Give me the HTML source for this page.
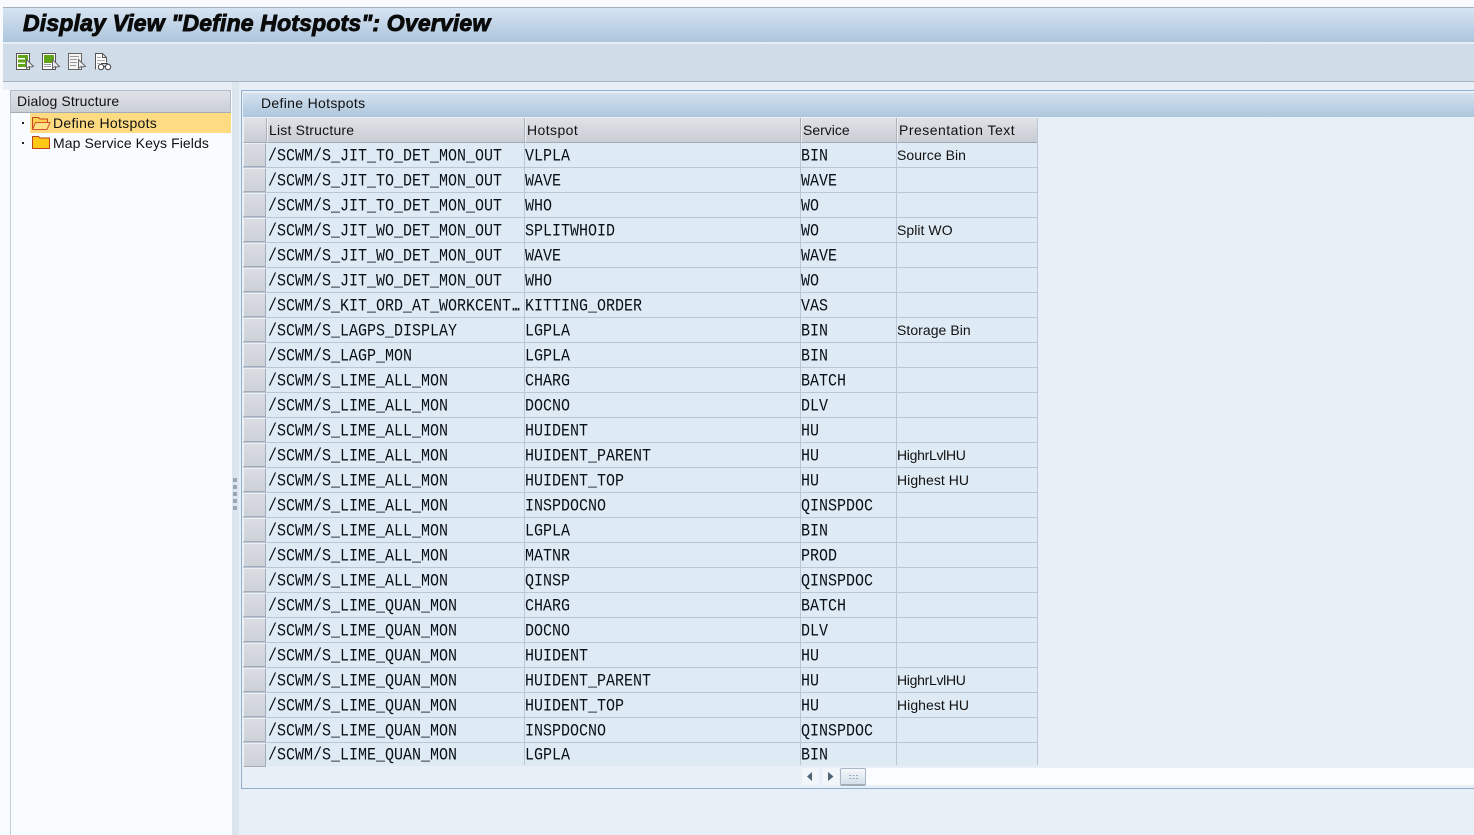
<!DOCTYPE html>
<html><head><meta charset="utf-8"><style>
html,body{margin:0;padding:0;width:1474px;height:835px;overflow:hidden;background:#e8eff7}
*{box-sizing:border-box}
.a{position:absolute}
.u{font-family:"Liberation Sans",sans-serif;font-size:14px;letter-spacing:.12px;color:#111;white-space:nowrap}
#rows{position:absolute;left:243px;top:143px;width:795px}
.r{position:relative;height:25px;width:795px;background:#deebf5;border-bottom:1px solid #b9c7d6}
.r:last-child{height:23px;border-bottom:0}
.r>*{position:absolute;top:0;height:100%;white-space:nowrap}
.s{left:0;width:23px;background:linear-gradient(#dadde3,#cdd1d8);border:1px solid #a9b2bc;border-color:#eef0f3 #a2abb6 #a2abb6 #eef0f3;top:0!important;height:24px!important}
.r>.m{top:2px;font-family:"Liberation Mono",monospace;font-size:15px;line-height:24px;color:#0a0e16;transform:scaleY(1.18);transform-origin:50% 12px}
.r:last-child>.m{top:1px}
.c1{left:25px}.c2{left:282px}.c3{left:558px}
.c4{left:654px;font-family:"Liberation Sans",sans-serif;font-size:14px;letter-spacing:.05px;line-height:25px;color:#111}
.h{position:absolute;top:118px;height:25px;background:linear-gradient(#dfe2e7,#c9cdd4);border-right:1px solid #a9b2bc;border-bottom:1px solid #a2abb6;border-left:1px solid #eef0f3;line-height:25px}
</style></head><body>
<div class="a" style="left:0;top:0;width:1474px;height:7px;background:#f8fafd"></div>
<div class="a" style="left:0;top:0;width:3px;height:90px;background:#f8fafd;z-index:3"></div>
<div class="a" style="left:3px;top:7px;width:1471px;height:2px;background:#a7b1bd"></div>
<div class="a" style="left:3px;top:8px;width:1471px;height:34px;background:linear-gradient(#d7e4f2,#adc5dc)"></div>
<div class="a" style="left:3px;top:42px;width:1471px;height:2px;background:#e5edf5"></div>
<div class="a" style="left:3px;top:44px;width:1471px;height:37px;background:#d0dde8"></div>
<div class="a" style="left:3px;top:81px;width:1471px;height:1px;background:#a5b2bf"></div>
<div class="a" style="left:23px;top:9px;line-height:29px;font-family:'Liberation Sans',sans-serif;font-weight:bold;font-style:italic;font-size:23px;letter-spacing:.17px;color:#0a0a0a;-webkit-text-stroke:.9px #0a0a0a;white-space:nowrap">Display View "Define Hotspots": Overview</div>

<svg class="a" style="left:15px;top:51px" width="100" height="22" viewBox="0 0 100 22">
<g fill="none" stroke-width="1">
<rect x="1.5" y="2.5" width="13" height="16" fill="#fff" stroke="#555"/>
<rect x="3" y="4" width="7" height="3" fill="#5fa516"/><rect x="3" y="8.500" width="7" height="3" fill="#5fa516"/><rect x="3" y="13" width="7" height="3" fill="#5fa516"/>
<rect x="10" y="4" width="3" height="12" fill="#5fa516"/>
<path d="M11.500 8.500v9l2.500-2 2 .5 2.500-.5-7-7z" fill="#e8edf2" stroke="#666"/>
<rect x="27.500" y="2.500" width="13" height="16" fill="#fff" stroke="#555"/>
<rect x="29" y="4" width="10" height="8" fill="#5fa516"/>
<path d="M29 13.500h7M29 15.500h7" stroke="#999"/>
<path d="M37.500 8.500v9l2.500-2 2 .5 2.500-.5-7-7z" fill="#e8edf2" stroke="#666"/>
<rect x="53.500" y="2.500" width="13" height="16" fill="#f4f4f4" stroke="#666"/>
<path d="M55 5.500h9M55 8.500h7M55 11.500h7M55 14.500h6" stroke="#999"/>
<path d="M63.500 8.500v9l2.500-2 2 .5 2.500-.5-7-7z" fill="#e8edf2" stroke="#666"/>
<path d="M80.500 18.500v-16h7l4 4v5" fill="#fff" stroke="#555"/>
<path d="M87.500 2.500v4h4" stroke="#555"/>
<path d="M82 6.500h4M82 9.500h8M82 12.500h3" stroke="#aaa"/>
<circle cx="86" cy="16" r="2.700" fill="#fff" stroke="#444"/><circle cx="93" cy="16" r="2.700" fill="#fff" stroke="#444"/>
<path d="M86 12.500h7M88.500 15.500h2" stroke="#444"/>
</g></svg>

<!-- left panel -->
<div class="a" style="left:0;top:82px;width:232px;height:753px;background:#f8fbff"></div>
<div class="a" style="left:0;top:82px;width:232px;height:8px;background:#e8eff7"></div>
<div class="a" style="left:10px;top:90px;width:1px;height:745px;background:#c6ced8"></div>
<div class="a u" style="left:10px;top:90px;width:221px;height:23px;background:linear-gradient(#dfe2e7,#cbcfd6);border:1px solid #b6bcc6;border-bottom:1px solid #a2abb6;padding-left:6px;line-height:21px">Dialog Structure</div>
<div class="a" style="left:30px;top:113px;width:201px;height:20px;background:#fddb83"></div>
<div class="a" style="left:22px;top:122px;width:2px;height:2px;background:#222"></div>
<div class="a" style="left:22px;top:142px;width:2px;height:2px;background:#222"></div>
<svg class="a" style="left:32px;top:115px" width="19" height="16" viewBox="0 0 19 16">
<path d="M.5 14.500v-12h6l1.500 1.500h7.500v3" fill="#fbd252" stroke="#c4431c"/>
<path d="M.5 14.500l3-7h14.500l-3 7z" fill="#fde28a" stroke="#d2562a"/>
</svg>
<svg class="a" style="left:32px;top:135px" width="19" height="16" viewBox="0 0 19 16">
<path d="M.5 13.500v-12h6l1.500 1.500h9.500v10.500z" fill="#fdc916" stroke="#c0421c"/>
</svg>
<div class="a u" style="left:53px;top:113px;line-height:21px;letter-spacing:.3px">Define Hotspots</div>
<div class="a u" style="left:53px;top:133px;line-height:21px;letter-spacing:.08px">Map Service Keys Fields</div>

<!-- sash -->
<div class="a" style="left:232px;top:82px;width:7px;height:753px;background:#dbe6ee"></div>
<div class="a" style="left:233px;top:478px;width:4px;height:4px;background:#97a7b6"></div>
<div class="a" style="left:233px;top:485px;width:4px;height:4px;background:#97a7b6"></div>
<div class="a" style="left:233px;top:492px;width:4px;height:4px;background:#97a7b6"></div>
<div class="a" style="left:233px;top:499px;width:4px;height:4px;background:#97a7b6"></div>
<div class="a" style="left:233px;top:506px;width:4px;height:4px;background:#97a7b6"></div>

<!-- right panel -->
<div class="a" style="left:241px;top:90px;width:1233px;height:699px;border:1px solid #8fb0cf;border-right:0"></div>
<div class="a" style="left:242px;top:92px;width:1232px;height:1px;background:#e8eff7"></div>
<div class="a u" style="left:243px;top:93px;width:1231px;height:24px;background:linear-gradient(#d3e1ef,#aec6dd);padding-left:18px;line-height:21px;letter-spacing:.32px">Define Hotspots</div>

<div class="h" style="left:243px;width:24px;padding:0"></div>
<div class="h u" style="left:267px;width:258px;padding-left:1px;letter-spacing:.2px">List Structure</div>
<div class="h u" style="left:525px;width:276px;padding-left:1px;letter-spacing:.42px">Hotspot</div>
<div class="h u" style="left:801px;width:96px;padding-left:1px;letter-spacing:0">Service</div>
<div class="h u" style="left:897px;width:141px;padding-left:1px;letter-spacing:.48px">Presentation Text</div>

<div id="rows">
<div class="r"><div class="s"></div><div class="m c1">/SCWM/S_JIT_TO_DET_MON_OUT</div><div class="m c2">VLPLA</div><div class="m c3">BIN</div><div class="c4">Source Bin</div></div>
<div class="r"><div class="s"></div><div class="m c1">/SCWM/S_JIT_TO_DET_MON_OUT</div><div class="m c2">WAVE</div><div class="m c3">WAVE</div></div>
<div class="r"><div class="s"></div><div class="m c1">/SCWM/S_JIT_TO_DET_MON_OUT</div><div class="m c2">WHO</div><div class="m c3">WO</div></div>
<div class="r"><div class="s"></div><div class="m c1">/SCWM/S_JIT_WO_DET_MON_OUT</div><div class="m c2">SPLITWHOID</div><div class="m c3">WO</div><div class="c4">Split WO</div></div>
<div class="r"><div class="s"></div><div class="m c1">/SCWM/S_JIT_WO_DET_MON_OUT</div><div class="m c2">WAVE</div><div class="m c3">WAVE</div></div>
<div class="r"><div class="s"></div><div class="m c1">/SCWM/S_JIT_WO_DET_MON_OUT</div><div class="m c2">WHO</div><div class="m c3">WO</div></div>
<div class="r"><div class="s"></div><div class="m c1">/SCWM/S_KIT_ORD_AT_WORKCENT<span style="letter-spacing:-6.500px;margin-left:-2px">...</span></div><div class="m c2">KITTING_ORDER</div><div class="m c3">VAS</div></div>
<div class="r"><div class="s"></div><div class="m c1">/SCWM/S_LAGPS_DISPLAY</div><div class="m c2">LGPLA</div><div class="m c3">BIN</div><div class="c4">Storage Bin</div></div>
<div class="r"><div class="s"></div><div class="m c1">/SCWM/S_LAGP_MON</div><div class="m c2">LGPLA</div><div class="m c3">BIN</div></div>
<div class="r"><div class="s"></div><div class="m c1">/SCWM/S_LIME_ALL_MON</div><div class="m c2">CHARG</div><div class="m c3">BATCH</div></div>
<div class="r"><div class="s"></div><div class="m c1">/SCWM/S_LIME_ALL_MON</div><div class="m c2">DOCNO</div><div class="m c3">DLV</div></div>
<div class="r"><div class="s"></div><div class="m c1">/SCWM/S_LIME_ALL_MON</div><div class="m c2">HUIDENT</div><div class="m c3">HU</div></div>
<div class="r"><div class="s"></div><div class="m c1">/SCWM/S_LIME_ALL_MON</div><div class="m c2">HUIDENT_PARENT</div><div class="m c3">HU</div><div class="c4" style="letter-spacing:-.3px">HighrLvlHU</div></div>
<div class="r"><div class="s"></div><div class="m c1">/SCWM/S_LIME_ALL_MON</div><div class="m c2">HUIDENT_TOP</div><div class="m c3">HU</div><div class="c4">Highest HU</div></div>
<div class="r"><div class="s"></div><div class="m c1">/SCWM/S_LIME_ALL_MON</div><div class="m c2">INSPDOCNO</div><div class="m c3">QINSPDOC</div></div>
<div class="r"><div class="s"></div><div class="m c1">/SCWM/S_LIME_ALL_MON</div><div class="m c2">LGPLA</div><div class="m c3">BIN</div></div>
<div class="r"><div class="s"></div><div class="m c1">/SCWM/S_LIME_ALL_MON</div><div class="m c2">MATNR</div><div class="m c3">PROD</div></div>
<div class="r"><div class="s"></div><div class="m c1">/SCWM/S_LIME_ALL_MON</div><div class="m c2">QINSP</div><div class="m c3">QINSPDOC</div></div>
<div class="r"><div class="s"></div><div class="m c1">/SCWM/S_LIME_QUAN_MON</div><div class="m c2">CHARG</div><div class="m c3">BATCH</div></div>
<div class="r"><div class="s"></div><div class="m c1">/SCWM/S_LIME_QUAN_MON</div><div class="m c2">DOCNO</div><div class="m c3">DLV</div></div>
<div class="r"><div class="s"></div><div class="m c1">/SCWM/S_LIME_QUAN_MON</div><div class="m c2">HUIDENT</div><div class="m c3">HU</div></div>
<div class="r"><div class="s"></div><div class="m c1">/SCWM/S_LIME_QUAN_MON</div><div class="m c2">HUIDENT_PARENT</div><div class="m c3">HU</div><div class="c4" style="letter-spacing:-.3px">HighrLvlHU</div></div>
<div class="r"><div class="s"></div><div class="m c1">/SCWM/S_LIME_QUAN_MON</div><div class="m c2">HUIDENT_TOP</div><div class="m c3">HU</div><div class="c4">Highest HU</div></div>
<div class="r"><div class="s"></div><div class="m c1">/SCWM/S_LIME_QUAN_MON</div><div class="m c2">INSPDOCNO</div><div class="m c3">QINSPDOC</div></div>
<div class="r"><div class="s"></div><div class="m c1">/SCWM/S_LIME_QUAN_MON</div><div class="m c2">LGPLA</div><div class="m c3">BIN</div></div>
</div>
<div class="a" style="left:524px;top:143px;width:1px;height:622px;background:#b9c7d6"></div>
<div class="a" style="left:800px;top:143px;width:1px;height:622px;background:#b9c7d6"></div>
<div class="a" style="left:896px;top:143px;width:1px;height:622px;background:#b9c7d6"></div>
<div class="a" style="left:1037px;top:118px;width:1px;height:647px;background:#b9c7d6"></div>

<!-- scrollbar -->
<div class="a" style="left:866px;top:768px;width:608px;height:17px;background:#fbfcfd"></div>
<div class="a" style="left:802px;top:768px;width:17px;height:17px;background:#f2f6fa"></div>
<div class="a" style="left:822px;top:768px;width:17px;height:17px;background:#f2f6fa"></div>
<svg class="a" style="left:802px;top:768px" width="38" height="17" viewBox="0 0 38 17"><path d="M10 4v9l-5-4.500z" fill="#4e6274"/><path d="M26 4v9l5.500-4.500z" fill="#4e6274"/></svg>
<div class="a" style="left:840px;top:768px;width:26px;height:18px;border:1px solid #a9b7c6;border-bottom:2px solid #a0adbb;border-radius:2px;background:linear-gradient(#f5f8fb,#d3dfea)"></div>
<svg class="a" style="left:848px;top:774px" width="11" height="6" viewBox="0 0 11 6"><path d="M1 1h2v1H1zM4.500 1h2v1h-2zM8 1h2v1H8zM1 4h2v1H1zM4.500 4h2v1h-2zM8 4h2v1H8z" fill="#9aa8b6"/></svg>
</body></html>
